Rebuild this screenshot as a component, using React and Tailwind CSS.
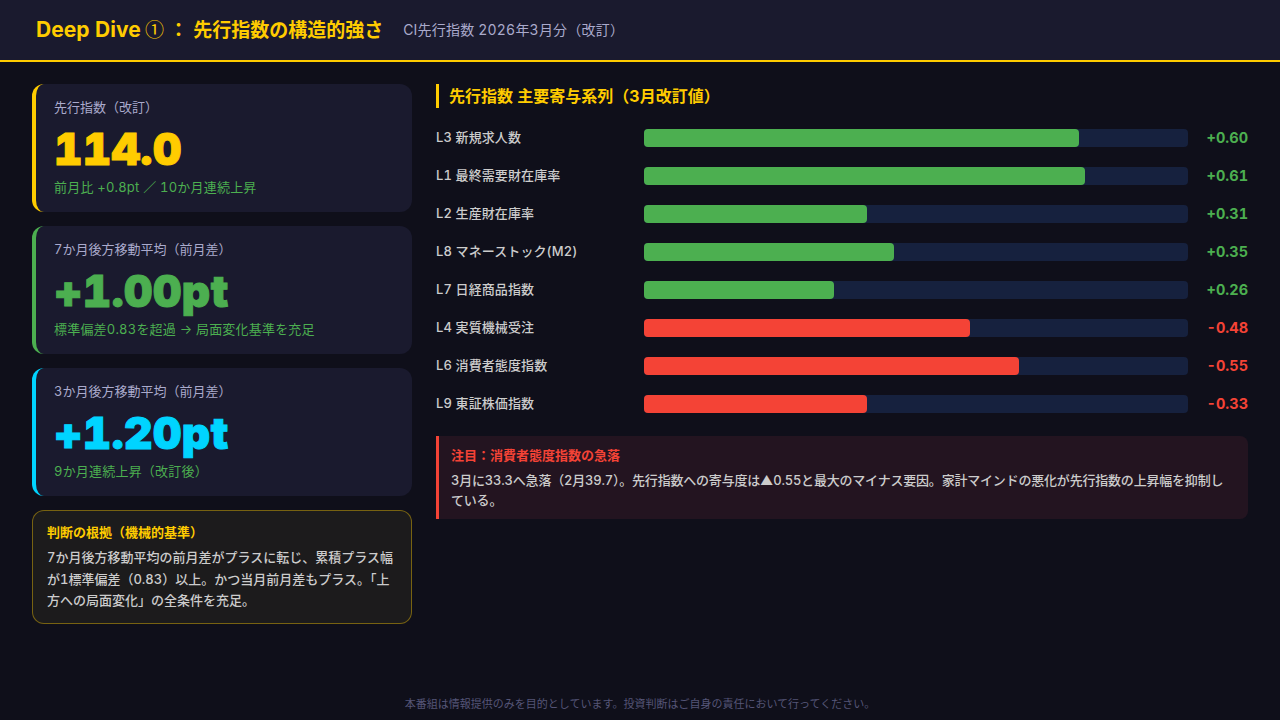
import React from 'react';

const font = 'font-["Inter","Noto_Sans_CJK_JP",sans-serif]';

const series = [
  { name: 'L3 新規求人数', pct: 80, value: '+0.60', up: true },
  { name: 'L1 最終需要財在庫率', pct: 81, value: '+0.61', up: true },
  { name: 'L2 生産財在庫率', pct: 41, value: '+0.31', up: true },
  { name: 'L8 マネーストック(M2)', pct: 46, value: '+0.35', up: true },
  { name: 'L7 日経商品指数', pct: 35, value: '+0.26', up: true },
  { name: 'L4 実質機械受注', pct: 60, value: '-0.48', up: false },
  { name: 'L6 消費者態度指数', pct: 69, value: '-0.55', up: false },
  { name: 'L9 東証株価指数', pct: 41, value: '-0.33', up: false },
];

const StatCard = ({ label, value, sub, border, color }) => (
  <div className={`h-32 rounded-xl border-l-4 bg-[#1a1a2e] pl-[18px] pt-[14px] ${border}`}>
    <div className="text-[13px] leading-[18px] text-[#aaaacc]">{label}</div>
    <div className={`mt-2 text-[44px] leading-[50px] font-black tracking-[0.5px] [-webkit-text-stroke:1px_currentColor] ${color}`}>{value}</div>
    <div className="mt-1 text-[13px] leading-[18px] tracking-[0.2px] text-[#4caf50]">{sub}</div>
  </div>
);

const App = () => {
  return (
    <div className={`flex h-[720px] w-[1280px] flex-col overflow-hidden bg-[#0f0f1a] tabular-nums ${font}`}>
      <header className="flex h-[62px] items-center gap-5 border-b-2 border-[#ffcc00] bg-[#1a1a2e] px-9">
        <h1 className="text-[19px] font-bold text-[#ffcc00]">
          <span className="text-[21px]">Deep Dive</span>
          <span className="font-['Noto_Sans_CJK_JP'] text-[19px] font-normal"> ①</span> ： 先行指数の構造的強さ
        </h1>
        <span className="text-sm tracking-[0.2px] text-[#aaaacc]">CI先行指数 2026年3月分（改訂）</span>
      </header>

      <main className="flex flex-1 gap-6 px-8 pt-[22px]">
        <div className="flex w-[380px] flex-col gap-[14px]">
          <StatCard label="先行指数（改訂）" value="114.0" sub="前月比 +0.8pt ／ 10か月連続上昇" border="border-[#ffcc00]" color="text-[#ffcc00]" />
          <StatCard label="7か月後方移動平均（前月差）" value="+1.00pt" sub="標準偏差0.83を超過 → 局面変化基準を充足" border="border-[#4caf50]" color="text-[#4caf50]" />
          <StatCard label="3か月後方移動平均（前月差）" value="+1.20pt" sub="9か月連続上昇（改訂後）" border="border-[#00d4ff]" color="text-[#00d4ff]" />
          <div className="h-[114px] rounded-xl border border-[#ffcc00]/40 bg-[#1c1b1c] px-[14px] pt-3">
            <div className="text-[13px] leading-[18px] font-bold text-[#ffcc00]">判断の根拠（機械的基準）</div>
            <p className="mt-1.5 text-[13px] leading-[21.5px] font-medium text-[#cccccc]">
              7か月後方移動平均の前月差がプラスに転じ、累積プラス幅が1標準偏差（0.83）以上。かつ当月前月差もプラス。「上方への局面変化」の全条件を充足。
            </p>
          </div>
        </div>

        <div className="flex-1">
          <h2 className="h-6 border-l-[3px] border-[#ffcc00] pl-[10px] text-base leading-6 font-bold text-[#ffcc00]">先行指数 主要寄与系列（3月改訂値）</h2>
          <div className="mt-[21px] flex flex-col gap-5">
            {series.map((row) => (
              <div key={row.name} className="flex h-[18px] items-center">
                <div className="w-[208px] pb-px text-[13px] font-medium tracking-[0.1px] text-[#cccccc]">{row.name}</div>
                <div className="h-[18px] w-[544px] rounded bg-[#16213e]">
                  <div className={`h-full rounded ${row.up ? 'bg-[#4caf50]' : 'bg-[#f44336]'}`} style={{ width: `${row.pct}%` }} />
                </div>
                <div className={`flex-1 pb-px text-right text-[14.5px] font-bold ${row.up ? 'text-[#4caf50]' : 'text-[#f44336]'}`}>{row.value}</div>
              </div>
            ))}
          </div>
          <div className="mt-[23px] h-[83px] rounded-r-lg border-l-[3px] border-[#f44336] bg-[#231420] pl-3 pr-6 pt-2">
            <div className="text-[13px] leading-[22px] font-bold text-[#f44336]">注目：消費者態度指数の急落</div>
            <p className="mt-1 text-[13px] leading-5 font-medium tracking-[-0.2px] text-[#cccccc]">
              3月に33.3へ急落（2月39.7）。先行指数への寄与度は▲0.55と最大のマイナス要因。家計マインドの悪化が先行指数の上昇幅を抑制している。
            </p>
          </div>
        </div>
      </main>

      <footer className="pb-2 text-center text-[11px] leading-4 text-[#555577]">本番組は情報提供のみを目的としています。投資判断はご自身の責任において行ってください。</footer>
    </div>
  );
};

export default App;
